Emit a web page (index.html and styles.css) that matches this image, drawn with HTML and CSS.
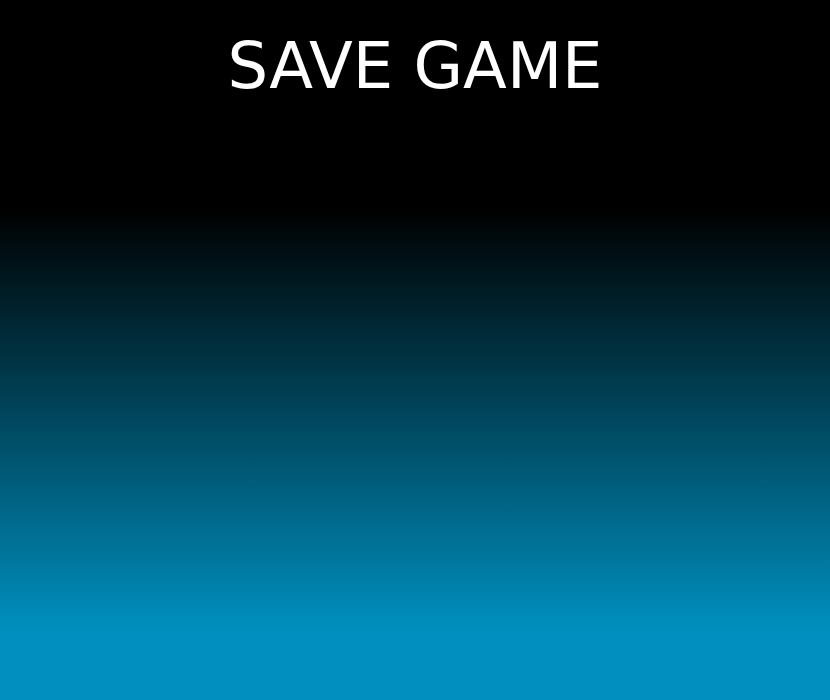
FILE: index.html
```html
<!DOCTYPE html>
<html>
<head>
<meta charset="utf-8">
<link rel="stylesheet" href="styles.css">
</head>
<body>
<main class="screen">
  <h1 class="title">SAVE GAME</h1>
</main>
</body>
</html>
```
FILE: styles.css
```css
html, body {
  margin: 0;
  padding: 0;
  height: 100%;
}
body {
  background: linear-gradient(to bottom, #000 30%, #008fbe 90%);
  font-family: "DejaVu Sans", sans-serif;
}
.screen {
  height: 700px;
  display: flex;
  flex-direction: column;
  align-items: center;
}
.title {
  margin: 0;
  padding-top: 34px;
  font-size: 64px;
  font-weight: normal;
  line-height: 1;
  color: #fff;
}
```
